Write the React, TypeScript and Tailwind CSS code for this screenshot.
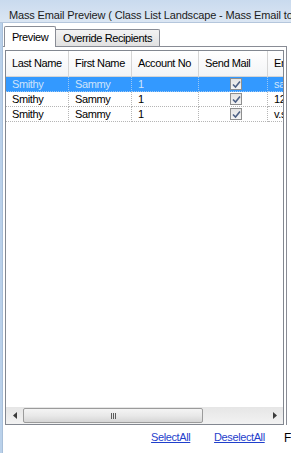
const font = { fontFamily: '"Liberation Sans", Arial, sans-serif' };

const columns = [
  { label: "Last Name", w: "w-[63px]" },
  { label: "First Name", w: "w-[63px]" },
  { label: "Account No", w: "w-[67px]" },
  { label: "Send Mail", w: "w-[69px]" },
  { label: "Email", w: "w-[60px]" },
];

const rows = [
  { last: "Smithy", first: "Sammy", acct: "1", email: "sammy@mail.com" },
  { last: "Smithy", first: "Sammy", acct: "1", email: "123@mail.com" },
  { last: "Smithy", first: "Sammy", acct: "1", email: "v.smithy@mail.com" },
];

const CheckBox = () => (
  <div className="w-[12px] h-[12px] border border-[#8e8f8f] bg-gradient-to-b from-[#e4e4e4] to-[#f4f4f4] flex items-center justify-center">
    <svg width="9" height="9" viewBox="0 0 9 9">
      <path d="M1 4.5 L3.5 7 L8 1.5" fill="none" stroke="#4d6185" strokeWidth="1.6" />
    </svg>
  </div>
);

const App = () => {
  return (
    <div className="w-[291px] h-[454px] bg-white overflow-hidden text-[11px] text-black" style={font}>
      <div className="h-[23px] bg-gradient-to-b from-[#c9daee] to-[#dbe6f3] border-b border-[#b4c6dc] pl-[9px] pt-[9px] text-[11px] leading-[13px] text-[#1b1b1b] whitespace-nowrap tracking-[-0.15px]">
        Mass Email Preview ( Class List Landscape - Mass Email to
      </div>
      <div className="flex h-[430px]">
        <div className="w-[5px] bg-[#bad1ea] border-r border-[#a8bfd9]" />
        <div className="flex-1 flex flex-col">
          <div className="h-[23px] flex items-end pl-[1px] relative z-10">
            <div className="h-[21px] w-[52px] bg-white border border-b-0 border-[#898c95] rounded-t-[2px] flex items-center justify-center tracking-[-0.4px] -mb-[1px]">
              Preview
            </div>
            <div className="h-[17px] w-[104px] bg-gradient-to-b from-[#f3f3f3] to-[#e1e1e1] border border-l-0 border-b-0 border-[#898c95] rounded-tr-[2px] flex items-center justify-center tracking-[-0.4px]">
              Override Recipients
            </div>
          </div>
          <div className="w-[284px] border-t border-r border-[#898c95] pt-[3px] pl-[2px] flex flex-col">
            <div className="w-[279px] h-[375px] border border-[#828790] flex flex-col overflow-hidden">
              <div className="flex h-[26px] border-b border-[#d5d5d5] bg-gradient-to-b from-white to-[#f3f4f6] shrink-0">
                {columns.map((c) => (
                  <div
                    key={c.label}
                    className={`${c.w} shrink-0 border-r border-[#d5d5d5] pl-[6px] flex items-center whitespace-nowrap tracking-[-0.4px]`}
                  >
                    {c.label}
                  </div>
                ))}
              </div>
              {rows.map((r, i) => {
                const sel = i === 0;
                const cell = `shrink-0 border-r border-b border-dotted pl-[6px] flex items-center whitespace-nowrap tracking-[-0.4px] ${
                  sel ? "border-[#9cc8f5]" : "border-[#b5b5b5]"
                }`;
                return (
                  <div
                    key={i}
                    className={`flex h-[15px] shrink-0 ${sel ? "bg-[#3399ff] text-[#cfe4fb]" : "bg-white text-black"}`}
                  >
                    <div className={`${cell} w-[63px]`}>{r.last}</div>
                    <div className={`${cell} w-[63px]`}>{r.first}</div>
                    <div className={`${cell} w-[67px]`}>{r.acct}</div>
                    <div className={`${cell} w-[69px] justify-center pl-0`}>
                      <CheckBox />
                    </div>
                    <div className={`${cell} w-[60px]`}>{r.email}</div>
                  </div>
                );
              })}
              <div className="flex-1" />
              <div className="h-[17px] shrink-0 flex bg-gradient-to-b from-[#e6e6e6] to-[#f2f2f2]">
                <div className="w-[17px] flex items-center justify-center">
                  <svg width="4" height="7" viewBox="0 0 4 7">
                    <path d="M4 0 L0 3.5 L4 7 Z" fill="#3c3c3c" />
                  </svg>
                </div>
                <div className="w-[180px] h-[15px] mt-[1px] rounded-[2px] border border-[#9b9b9b] bg-gradient-to-b from-[#f4f4f4] via-[#e9e9e9] to-[#d6d6d6] flex items-center justify-center gap-[1px]">
                  <span className="w-[1px] h-[6px] bg-[#5b5b5b]" />
                  <span className="w-[1px] h-[6px] bg-[#5b5b5b]" />
                  <span className="w-[1px] h-[6px] bg-[#5b5b5b]" />
                </div>
                <div className="flex-1" />
                <div className="w-[17px] flex items-center justify-center">
                  <svg width="4" height="7" viewBox="0 0 4 7">
                    <path d="M0 0 L4 3.5 L0 7 Z" fill="#3c3c3c" />
                  </svg>
                </div>
              </div>
            </div>
          </div>
          <div className="flex items-center h-[25px] pl-[148px] whitespace-nowrap tracking-[-0.4px]">
            <span className="w-[63px] text-[#1f3fcc] underline">SelectAll</span>
            <span className="w-[70px] text-[#1f3fcc] underline">DeselectAll</span>
            <span className="text-[12px]">F</span>
          </div>
        </div>
      </div>
    </div>
  );
};

export default App;
